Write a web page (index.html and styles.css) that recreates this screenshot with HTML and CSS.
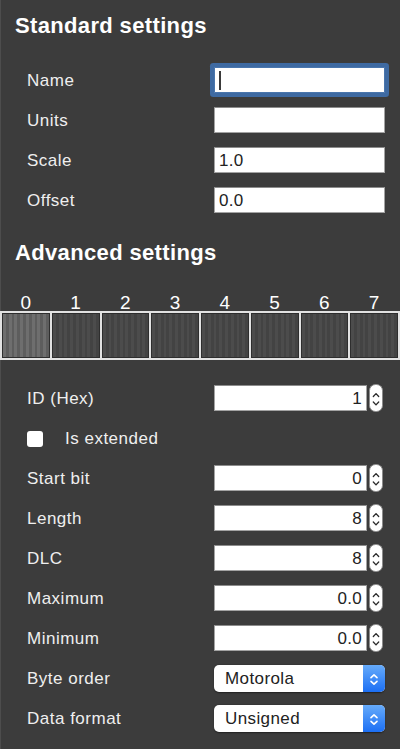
FILE: index.html
```html
<!DOCTYPE html>
<html>
<head>
<meta charset="utf-8">
<link rel="stylesheet" href="styles.css">
</head>
<body>
<div class="panel">
  <h2 class="section-title">Standard settings</h2>
  <div class="form">
    <div class="row"><span class="label">Name</span><div class="field focus"><span class="caret"></span></div></div>
    <div class="row"><span class="label">Units</span><div class="field"></div></div>
    <div class="row"><span class="label">Scale</span><div class="field">1.0</div></div>
    <div class="row"><span class="label">Offset</span><div class="field">0.0</div></div>
  </div>

  <h2 class="section-title adv">Advanced settings</h2>
  <div class="bit-labels">
    <span>0</span><span>1</span><span>2</span><span>3</span><span>4</span><span>5</span><span>6</span><span>7</span>
  </div>
  <div class="bytes">
    <div class="byte active"></div>
    <div class="byte"></div>
    <div class="byte"></div>
    <div class="byte"></div>
    <div class="byte"></div>
    <div class="byte"></div>
    <div class="byte"></div>
    <div class="byte"></div>
  </div>

  <div class="form form-adv">
    <div class="row"><span class="label">ID (Hex)</span>
      <div class="spin"><div class="field num">1</div>
        <svg class="stepper" width="14" height="28" viewBox="0 0 14 28"><rect x="0.5" y="0.5" width="13" height="27" rx="6" fill="#fff" stroke="#8c8c8c"/><path d="M4.3 12.5 L7 9.6 L9.7 12.5" fill="none" stroke="#2a2a2a" stroke-width="1.3" stroke-linecap="round" stroke-linejoin="round"/><path d="M4.3 18 L7 20.9 L9.7 18" fill="none" stroke="#2a2a2a" stroke-width="1.3" stroke-linecap="round" stroke-linejoin="round"/></svg>
      </div>
    </div>
    <div class="row check-row"><span class="checkbox"></span><span class="label">Is extended</span></div>
    <div class="row"><span class="label">Start bit</span>
      <div class="spin"><div class="field num">0</div>
        <svg class="stepper" width="14" height="28" viewBox="0 0 14 28"><rect x="0.5" y="0.5" width="13" height="27" rx="6" fill="#fff" stroke="#8c8c8c"/><path d="M4.3 12.5 L7 9.6 L9.7 12.5" fill="none" stroke="#2a2a2a" stroke-width="1.3" stroke-linecap="round" stroke-linejoin="round"/><path d="M4.3 18 L7 20.9 L9.7 18" fill="none" stroke="#2a2a2a" stroke-width="1.3" stroke-linecap="round" stroke-linejoin="round"/></svg>
      </div>
    </div>
    <div class="row"><span class="label">Length</span>
      <div class="spin"><div class="field num">8</div>
        <svg class="stepper" width="14" height="28" viewBox="0 0 14 28"><rect x="0.5" y="0.5" width="13" height="27" rx="6" fill="#fff" stroke="#8c8c8c"/><path d="M4.3 12.5 L7 9.6 L9.7 12.5" fill="none" stroke="#2a2a2a" stroke-width="1.3" stroke-linecap="round" stroke-linejoin="round"/><path d="M4.3 18 L7 20.9 L9.7 18" fill="none" stroke="#2a2a2a" stroke-width="1.3" stroke-linecap="round" stroke-linejoin="round"/></svg>
      </div>
    </div>
    <div class="row"><span class="label">DLC</span>
      <div class="spin"><div class="field num">8</div>
        <svg class="stepper" width="14" height="28" viewBox="0 0 14 28"><rect x="0.5" y="0.5" width="13" height="27" rx="6" fill="#fff" stroke="#8c8c8c"/><path d="M4.3 12.5 L7 9.6 L9.7 12.5" fill="none" stroke="#2a2a2a" stroke-width="1.3" stroke-linecap="round" stroke-linejoin="round"/><path d="M4.3 18 L7 20.9 L9.7 18" fill="none" stroke="#2a2a2a" stroke-width="1.3" stroke-linecap="round" stroke-linejoin="round"/></svg>
      </div>
    </div>
    <div class="row"><span class="label">Maximum</span>
      <div class="spin"><div class="field num">0.0</div>
        <svg class="stepper" width="14" height="28" viewBox="0 0 14 28"><rect x="0.5" y="0.5" width="13" height="27" rx="6" fill="#fff" stroke="#8c8c8c"/><path d="M4.3 12.5 L7 9.6 L9.7 12.5" fill="none" stroke="#2a2a2a" stroke-width="1.3" stroke-linecap="round" stroke-linejoin="round"/><path d="M4.3 18 L7 20.9 L9.7 18" fill="none" stroke="#2a2a2a" stroke-width="1.3" stroke-linecap="round" stroke-linejoin="round"/></svg>
      </div>
    </div>
    <div class="row"><span class="label">Minimum</span>
      <div class="spin"><div class="field num">0.0</div>
        <svg class="stepper" width="14" height="28" viewBox="0 0 14 28"><rect x="0.5" y="0.5" width="13" height="27" rx="6" fill="#fff" stroke="#8c8c8c"/><path d="M4.3 12.5 L7 9.6 L9.7 12.5" fill="none" stroke="#2a2a2a" stroke-width="1.3" stroke-linecap="round" stroke-linejoin="round"/><path d="M4.3 18 L7 20.9 L9.7 18" fill="none" stroke="#2a2a2a" stroke-width="1.3" stroke-linecap="round" stroke-linejoin="round"/></svg>
      </div>
    </div>
    <div class="row"><span class="label">Byte order</span>
      <div class="select"><span class="select-text">Motorola</span>
        <span class="select-btn"><svg width="22" height="27" viewBox="0 0 22 27"><path d="M8 12.6 L11 9.8 L14 12.6" fill="none" stroke="#fff" stroke-width="1.6" stroke-linecap="round" stroke-linejoin="round"/><path d="M8 16.4 L11 19.2 L14 16.4" fill="none" stroke="#fff" stroke-width="1.6" stroke-linecap="round" stroke-linejoin="round"/></svg></span>
      </div>
    </div>
    <div class="row"><span class="label">Data format</span>
      <div class="select"><span class="select-text">Unsigned</span>
        <span class="select-btn"><svg width="22" height="27" viewBox="0 0 22 27"><path d="M8 12.6 L11 9.8 L14 12.6" fill="none" stroke="#fff" stroke-width="1.6" stroke-linecap="round" stroke-linejoin="round"/><path d="M8 16.4 L11 19.2 L14 16.4" fill="none" stroke="#fff" stroke-width="1.6" stroke-linecap="round" stroke-linejoin="round"/></svg></span>
      </div>
    </div>
  </div>
</div>
</body>
</html>
```

FILE: styles.css
```css
html, body {
  margin: 0;
  padding: 0;
  background: #3c3c3c;
}

body {
  font-family: "Liberation Sans", Arial, sans-serif;
}

.panel {
  width: 400px;
  height: 749px;
  overflow: hidden;
  box-shadow: inset 1px 0 0 #4d4d4d;
}

.section-title {
  margin: 0;
  padding: 13px 0 21px 15px;
  font-size: 22px;
  line-height: 26px;
  font-weight: bold;
  color: #ffffff;
  letter-spacing: 0.35px;
}

.section-title.adv {
  padding: 20px 0 25px 15px;
}

.form {
  display: flex;
  flex-direction: column;
  padding-left: 27px;
}

.row {
  height: 40px;
  display: grid;
  grid-template-columns: 187px 171px;
  align-items: center;
}

.label {
  font-size: 17px;
  letter-spacing: 0.5px;
  color: #efefef;
  padding-top: 2px;
}

.field {
  height: 26px;
  box-sizing: border-box;
  background: #ffffff;
  border: 1px solid #a3a3a3;
  border-top-color: #8c8c8c;
  font-size: 17px;
  color: #222222;
  padding: 1px 4px 0;
  display: flex;
  align-items: center;
  letter-spacing: 0.3px;
}

.field.focus {
  border-color: #4a76ad;
  border-radius: 1px;
  box-shadow: 0 0 0 4px #3e6aa2;
}

.caret {
  width: 2px;
  height: 19px;
  background: #3a3a3a;
}

.bit-labels {
  display: grid;
  grid-template-columns: repeat(8, 1fr);
  column-gap: 2px;
  padding: 2px 2px 0;
  height: 20px;
  box-sizing: border-box;
  font-size: 19px;
  line-height: 19px;
  color: #ffffff;
  text-align: center;
}

.bytes {
  display: grid;
  grid-template-columns: repeat(8, 1fr);
  gap: 2px;
  padding: 2px;
  height: 49px;
  box-sizing: border-box;
  background: #e2e2e2;
}

.byte {
  border: 1px solid #2e2e2e;
  background: repeating-linear-gradient(90deg, #4c4c4c 0, #4c4c4c 6.25%, #434343 6.25%, #434343 12.5%);
}

.byte.active {
  background: repeating-linear-gradient(90deg, #6e6e6e 0, #6e6e6e 6.25%, #5d5d5d 6.25%, #5d5d5d 12.5%);
}

.form-adv {
  margin-top: 18px;
}

.spin {
  display: flex;
  align-items: center;
  gap: 2px;
}

.spin .field {
  width: 153px;
  justify-content: flex-end;
  padding-right: 4px;
}

.stepper {
  display: block;
  flex: none;
}

.check-row {
  display: flex;
  align-items: center;
  gap: 22px;
}

.checkbox {
  width: 16px;
  height: 16px;
  background: #ffffff;
  border-radius: 3px;
  margin-top: 1px;
}

.select {
  height: 27px;
  display: flex;
  align-items: stretch;
  background: #ffffff;
  border-radius: 5px;
  box-shadow: 0 0.5px 1.5px rgba(0, 0, 0, 0.45);
}

.select-text {
  flex: 1;
  display: flex;
  align-items: center;
  padding-left: 11px;
  padding-top: 1px;
  font-size: 17px;
  letter-spacing: 0.4px;
  color: #222222;
}

.select-btn {
  width: 22px;
  flex: none;
  display: block;
  border-radius: 0 5px 5px 0;
  background: linear-gradient(#66abfa, #1c6ff4);
}

.select-btn svg {
  display: block;
}
```
